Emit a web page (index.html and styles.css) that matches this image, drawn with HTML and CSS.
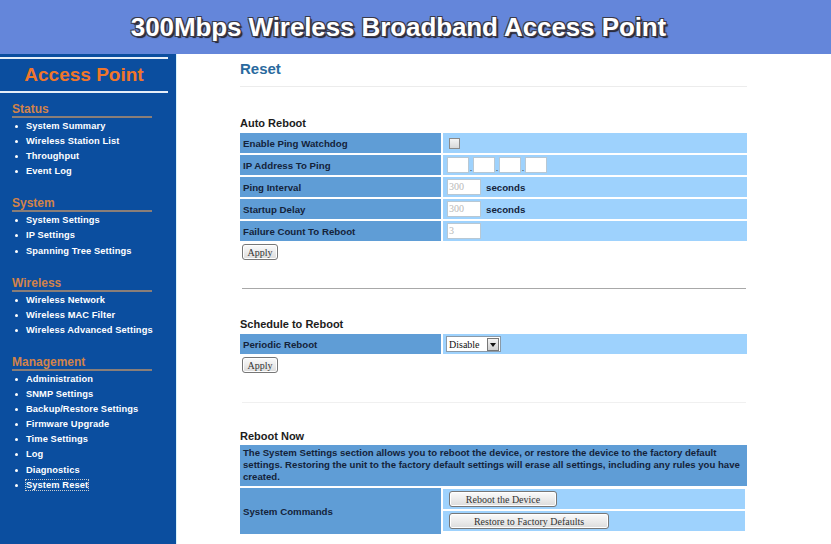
FILE: index.html
```html
<!DOCTYPE html>
<html>
<head>
<meta charset="utf-8">
<title>Reset</title>
<link rel="stylesheet" href="styles.css">
</head>
<body>
<header class="header"><h1>300Mbps Wireless Broadband Access Point</h1></header>
<div class="layout">
  <nav class="sidebar">
    <div class="brand">Access Point</div>
    <div class="section">
      <h2>Status</h2>
      <ul>
        <li>System Summary</li>
        <li>Wireless Station List</li>
        <li>Throughput</li>
        <li>Event Log</li>
      </ul>
    </div>
    <div class="section">
      <h2>System</h2>
      <ul>
        <li>System Settings</li>
        <li>IP Settings</li>
        <li>Spanning Tree Settings</li>
      </ul>
    </div>
    <div class="section">
      <h2>Wireless</h2>
      <ul>
        <li>Wireless Network</li>
        <li>Wireless MAC Filter</li>
        <li>Wireless Advanced Settings</li>
      </ul>
    </div>
    <div class="section">
      <h2>Management</h2>
      <ul>
        <li>Administration</li>
        <li>SNMP Settings</li>
        <li>Backup/Restore Settings</li>
        <li>Firmware Upgrade</li>
        <li>Time Settings</li>
        <li>Log</li>
        <li>Diagnostics</li>
        <li><span class="current">System Reset</span></li>
      </ul>
    </div>
  </nav>
  <main class="main">
    <h1 class="title">Reset</h1>

    <h3 class="sub first">Auto Reboot</h3>
    <div class="form">
      <div class="label">Enable Ping Watchdog</div>
      <div class="value"><span class="check"></span></div>
      <div class="label">IP Address To Ping</div>
      <div class="value"><span class="ip"></span><span class="dot">.</span><span class="ip"></span><span class="dot">.</span><span class="ip"></span><span class="dot">.</span><span class="ip"></span></div>
      <div class="label">Ping Interval</div>
      <div class="value"><span class="field">300</span><span class="unit">seconds</span></div>
      <div class="label">Startup Delay</div>
      <div class="value"><span class="field">300</span><span class="unit">seconds</span></div>
      <div class="label">Failure Count To Reboot</div>
      <div class="value"><span class="field">3</span></div>
    </div>
    <button class="btn apply">Apply</button>
    <hr class="rule dark">

    <h3 class="sub">Schedule to Reboot</h3>
    <div class="form">
      <div class="label">Periodic Reboot</div>
      <div class="value"><span class="select">Disable<span class="arrow"></span></span></div>
    </div>
    <button class="btn apply">Apply</button>
    <hr class="rule light">

    <h3 class="sub last">Reboot Now</h3>
    <div class="form">
      <div class="desc">The System Settings section allows you to reboot the device, or restore the device to the factory default settings. Restoring the unit to the factory default settings will erase all settings, including any rules you have created.</div>
      <div class="label tall">System Commands</div>
      <div class="cmds">
        <div class="cmd"><button class="btn wide1">Reboot the Device</button></div>
        <div class="cmd"><button class="btn wide2">Restore to Factory Defaults</button></div>
      </div>
    </div>
  </main>
</div>
</body>
</html>
```

FILE: styles.css
```css
html, body { margin: 0; padding: 0; }
body {
  font-family: "Liberation Sans", Arial, sans-serif;
  background: #fff;
  width: 831px;
  height: 544px;
  overflow: hidden;
}
.header {
  height: 54px;
  background: #6486da;
  display: flex;
  align-items: center;
  justify-content: center;
}
.header h1 {
  margin: 0 34px 0 0;
  font-size: 26px;
  font-weight: bold;
  color: #fff;
  letter-spacing: -0.1px;
  text-shadow: -1px -1px 0 #3a3a4a, 1px -1px 0 #3a3a4a, -1px 1px 0 #3a3a4a, 1px 1px 0 #3a3a4a, 2px 2px 1px #22222e;
}
.layout {
  display: flex;
  height: 490px;
}
.sidebar {
  width: 177px;
  background: #0b4e9f;
  border-right: 1px solid #d8f2fb;
  box-sizing: border-box;
  padding-top: 3px;
  color: #fff;
}
.brand {
  width: 168px;
  border-top: 2px solid #e6eef8;
  border-bottom: 2px solid #e6eef8;
  height: 32px;
  box-sizing: content-box;
  display: flex;
  align-items: center;
  justify-content: center;
  color: #f0762a;
  font-size: 19px;
  font-weight: bold;
  margin-bottom: 9px;
}
.section { margin-left: 12px; margin-bottom: 17px; }
.section h2 {
  margin: 0;
  width: 140px;
  font-size: 12px;
  font-weight: bold;
  color: #d2834a;
  border-bottom: 2px solid #8a7e78;
  line-height: 14px;
  padding-bottom: 0;
  margin-bottom: 1px;
}
.section ul { list-style: none; margin: 0; padding: 0; }
.section li {
  font-size: 9.3px;
  font-weight: bold;
  line-height: 15.1px;
  padding-left: 14px;
  position: relative;
  letter-spacing: 0.1px;
}
.section li::before {
  content: "";
  position: absolute;
  left: 3px;
  top: 6px;
  width: 3px;
  height: 3px;
  border-radius: 50%;
  background: #fff;
}
.current { outline: 1px dotted #ccc; }
.main {
  padding-left: 63px;
  width: 507px;
}
.title {
  margin: 6px 0 0 0;
  font-size: 15px;
  font-weight: bold;
  color: #2a6a9e;
  line-height: 17px;
  padding-bottom: 9px;
  border-bottom: 1px solid #ececec;
}
.sub {
  margin: 0;
  font-size: 11px;
  font-weight: bold;
  color: #1c1c1c;
  line-height: 13px;
  margin-top: 29px;
  margin-bottom: 3px;
}
.sub.first { margin-top: 30px; }
.sub.last { margin-top: 27px; margin-bottom: 2px; }
.form {
  display: grid;
  grid-template-columns: 201px 1fr;
  gap: 2px;
}
.label {
  background: #5f9dd6;
  height: 20px;
  display: flex;
  align-items: center;
  padding-left: 3px;
  font-size: 9.7px;
  font-weight: bold;
  color: #14233a;
}
.label.tall { height: auto; }
.value {
  background: #9ed2fd;
  height: 20px;
  display: flex;
  align-items: center;
  padding-left: 4px;
}
.check {
  width: 9px;
  height: 9px;
  margin-left: 2px;
  border: 1px solid #8a8a8a;
  background: linear-gradient(#f4f4f4, #d8d8d8);
  box-sizing: content-box;
}
.ip {
  width: 20px;
  height: 14px;
  background: #fff;
  border: 1px solid #b8c8d4;
}
.dot { font-size: 9px; width: 4px; text-align: center; color: #333; align-self: flex-end; margin-bottom: 2px; }
.field {
  width: 31px;
  height: 14px;
  background: #fff;
  border: 1px solid #b8c8d4;
  font-family: "Liberation Serif", serif;
  font-size: 10px;
  color: #b8b8b8;
  line-height: 14px;
  padding-left: 1px;
}
.unit {
  margin-left: 5px;
  font-size: 9.7px;
  font-weight: bold;
  color: #14233a;
}
.select {
  position: relative;
  width: 55px;
  height: 16px;
  background: #fff;
  border: 1px solid #8a9aa8;
  font-family: "Liberation Serif", serif;
  font-size: 10px;
  line-height: 15px;
  color: #111;
  padding-left: 2px;
  box-sizing: border-box;
  margin-left: -1px;
}
.arrow {
  position: absolute;
  right: 1px;
  top: 1px;
  width: 10px;
  height: 11px;
  background: linear-gradient(#f4f4f4, #cfcfcf);
  border: 1px solid #777;
}
.arrow::after {
  content: "";
  position: absolute;
  left: 1.5px;
  top: 4px;
  border-left: 3.5px solid transparent;
  border-right: 3.5px solid transparent;
  border-top: 4px solid #111;
}
.btn {
  display: block;
  font-family: "Liberation Serif", serif;
  font-size: 10px;
  color: #333;
  height: 16px;
  padding: 0 4px;
  border: 1px solid #777;
  border-radius: 3px;
  background: linear-gradient(#fbfbfb, #dcdcdc);
  box-shadow: inset 0 0 0 1px #fff;
  line-height: 13px;
}
.apply { width: 36px; margin: 3px 0 0 2px; }
.rule { border: 0; margin: 0; }
.rule.dark { border-top: 1px solid #a8a8a8; margin-top: 28px; width: 504px; margin-left: 2px; }
.rule.light { border-top: 1px solid #f0f0f0; margin-top: 29px; width: 504px; margin-left: 2px; }
.desc {
  grid-column: 1 / 3;
  background: #5f9dd6;
  font-size: 9.6px;
  font-weight: bold;
  color: #14233a;
  line-height: 12px;
  padding: 2px 3px 3px 3px;
  letter-spacing: 0;
}
.cmds {
  display: flex;
  flex-direction: column;
  gap: 2px;
  padding: 1px 2px 3px 0;
}
.cmd {
  background: #9ed2fd;
  height: 20px;
  display: flex;
  align-items: center;
  padding-left: 6px;
}
.wide1 { width: 108px; }
.wide2 { width: 160px; }
```
